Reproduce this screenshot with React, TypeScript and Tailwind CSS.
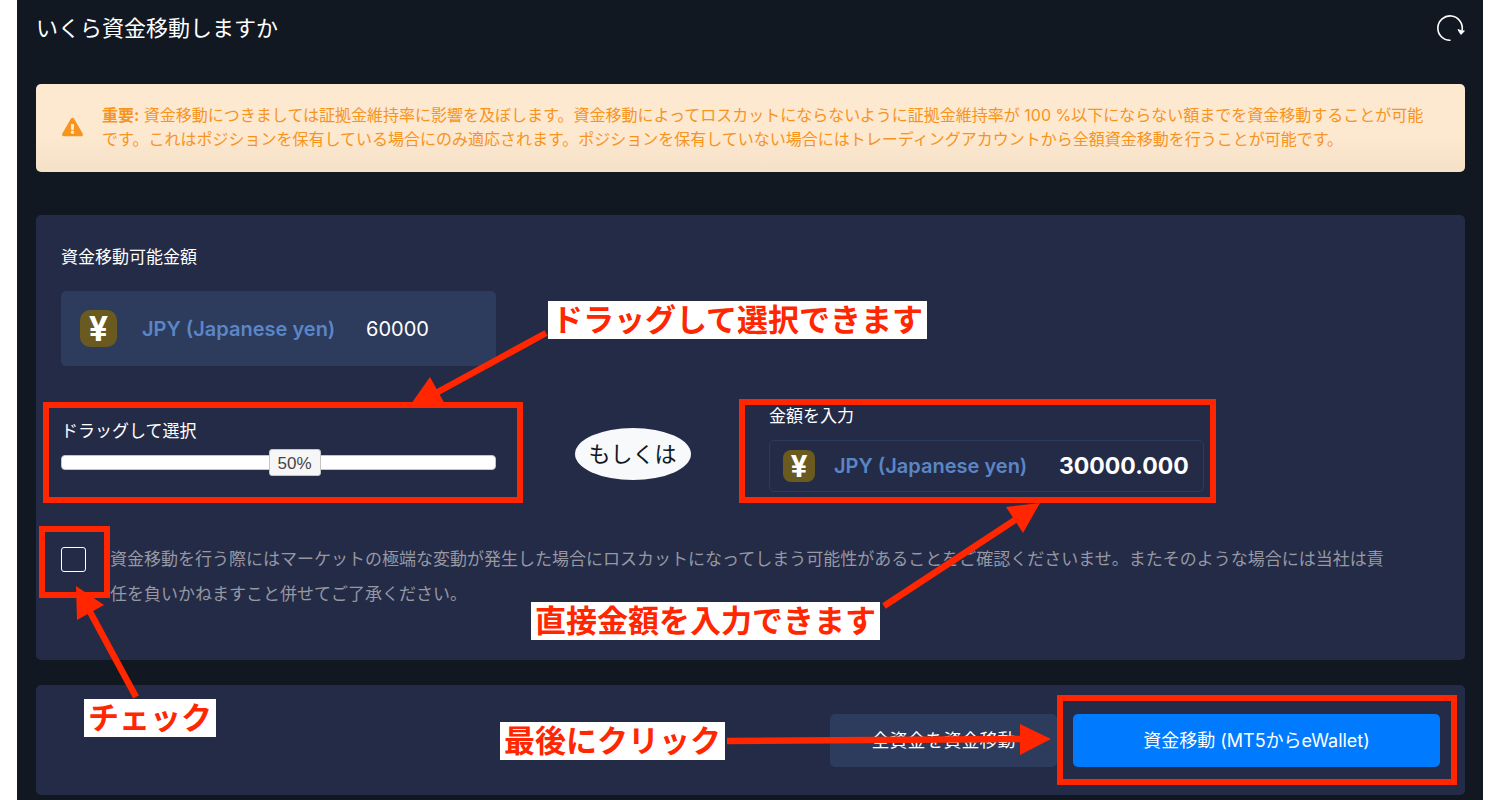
import React, { useState } from 'react';
import { FaExclamationTriangle } from 'react-icons/fa';

interface CalloutProps {
  className: string;
  children: React.ReactNode;
}

interface ArrowProps {
  className: string;
  width: number;
  height: number;
  line: [number, number, number, number];
  head: string;
}

const Callout: React.FC<CalloutProps> = ({ className, children }) => (
  <span
    className={`pointer-events-none absolute z-20 bg-white px-1 text-[31px] leading-[38px] font-bold whitespace-nowrap text-[#ff2600] ${className}`}
  >
    {children}
  </span>
);

const Frame: React.FC<{ className: string }> = ({ className }) => (
  <span className={`pointer-events-none absolute z-10 border-6 border-[#ff2600] ${className}`} />
);

const Arrow: React.FC<ArrowProps> = ({ className, width, height, line, head }) => (
  <svg
    className={`pointer-events-none absolute z-20 max-w-none ${className}`}
    width={width}
    height={height}
    viewBox={`0 0 ${width} ${height}`}
    aria-hidden="true"
  >
    <line x1={line[0]} y1={line[1]} x2={line[2]} y2={line[3]} stroke="#ff2600" strokeWidth="6.5" />
    <polygon points={head} fill="#ff2600" />
  </svg>
);

const RefreshIcon: React.FC = () => (
  <svg width="30" height="30" viewBox="0 0 30 30" fill="none" aria-hidden="true">
    <path
      d="M15 27.3A12.2 12.2 0 1 1 27.1 17"
      stroke="white"
      strokeWidth="1.6"
      strokeLinecap="round"
    />
    <path d="M23 16.6L26.6 17.8L29.4 18L25.9 21.4Z" fill="white" stroke="white" strokeWidth="1" strokeLinejoin="round" />
  </svg>
);

const Alert: React.FC = () => (
  <div
    role="alert"
    className="flex items-center gap-[19px] rounded-[5px] bg-linear-to-b from-[#fde8d0] from-60% to-[#f4e1c6] px-[26px] pt-[19px] pb-[21px] text-[#f7941d]"
  >
    <FaExclamationTriangle className="h-5 w-[21px] shrink-0" aria-hidden="true" />
    <p className="text-base leading-6">
      <strong className="font-bold">重要:</strong>{' '}
      資金移動につきましては証拠金維持率に影響を及ぼします。資金移動によってロスカットにならないように証拠金維持率が 100 %以下にならない額までを資金移動することが可能
      <br />
      です。これはポジションを保有している場合にのみ適応されます。ポジションを保有していない場合にはトレーディングアカウントから全額資金移動を行うことが可能です。
    </p>
  </div>
);

const App: React.FC = () => {
  const [percent, setPercent] = useState(50);
  const [amount, setAmount] = useState('30000.000');

  const handleDrag = (value: number) => {
    setPercent(value);
    setAmount((600 * value).toFixed(3));
  };

  return (
    <div className="min-h-screen bg-white px-[17px] font-[Inter,'Noto_Sans_CJK_JP',sans-serif]">
      <main className="min-h-screen overflow-hidden bg-[#111821] pr-[18px] pl-[19px] text-white">
        <header className="flex items-center justify-between pt-3 pb-10">
          <h1 className="text-[22px] leading-8">いくら資金移動しますか</h1>
          <button type="button" aria-label="更新">
            <RefreshIcon />
          </button>
        </header>

        <Alert />

        <section className="mt-[43px] rounded-[5px] bg-[#242b47] px-[25px] pt-[30px] pb-12">
          <h2 className="text-[17px] leading-6">資金移動可能金額</h2>

          <div className="grid grid-cols-[435fr_273fr_435fr_236fr]">
            <div className="mt-[22px] flex h-[75px] items-center rounded-[5px] bg-[#2d3b5d] pl-[19px]">
              <span className="flex size-[37px] items-center justify-center rounded-[10px] bg-[#6a5a20] text-[34px] leading-none font-bold">
                ¥
              </span>
              <span className="ml-[25px] w-[200px] text-xl font-semibold text-[#5b86c5]">
                JPY (Japanese yen)
              </span>
              <span className="ml-6 text-xl">60000</span>
            </div>
          </div>

          <div className="mt-[37px] grid grid-cols-[435fr_273fr_435fr_236fr]">
            <div className="relative pt-4">
              <label htmlFor="percent" className="block text-[17px] leading-6">
                ドラッグして選択
              </label>
              <div className="relative mt-3 h-[15px]">
                <input
                  id="percent"
                  type="range"
                  min={0}
                  max={100}
                  value={percent}
                  onChange={(e) => handleDrag(Number(e.target.value))}
                  className="block h-[15px] w-full appearance-none rounded-[4px] border border-[#c5c5c5] bg-white [&::-webkit-slider-thumb]:opacity-0"
                />
                <span
                  className="pointer-events-none absolute -top-[6px] -ml-[10px] h-[27px] w-[52px] rounded-[3px] border border-[#c5c5c5] bg-[#f6f6f6] text-center font-[Liberation_Sans,sans-serif] text-[17px] leading-[27px] text-[#454545]"
                  style={{ left: `${percent}%` }}
                >
                  {percent}%
                </span>
              </div>
              <Frame className="-top-px -right-[27px] -bottom-[11px] -left-[18px]" />
              <Arrow
                className="-top-[73px] left-[350px]"
                width={137}
                height={78}
                line={[135, 3, 25, 63]}
                head="19,47 35,76 0,74"
              />
              <Callout className="-top-[102px] left-[487px]">ドラッグして選択できます</Callout>
            </div>

            <div className="flex justify-center pt-[25px]">
              <span className="flex h-[52px] w-[116px] items-center justify-center rounded-[50%] bg-[#f8f9fb] text-[22px] text-[#111821]">
                もしくは
              </span>
            </div>

            <div className="relative">
              <label htmlFor="amount" className="block pt-px text-[17px] leading-6">
                金額を入力
              </label>
              <div className="mt-3 flex h-[52px] items-center rounded-[5px] border border-[#2d3b5d] pr-3 pl-[13px]">
                <span className="flex size-8 shrink-0 items-center justify-center rounded-[8px] bg-[#6a5a20] text-[30px] leading-none font-bold">
                  ¥
                </span>
                <span className="ml-[19px] w-[200px] shrink-0 text-xl font-semibold text-[#5b86c5]">
                  JPY (Japanese yen)
                </span>
                <input
                  id="amount"
                  type="text"
                  value={amount}
                  onChange={(e) => setAmount(e.target.value)}
                  className="ml-[25px] w-0 grow bg-transparent text-[23px] font-bold outline-none"
                />
              </div>
              <Frame className="-top-1 -right-3 -bottom-[11px] -left-[30px]" />
              <Arrow
                className="top-[97px] left-[111px]"
                width={165}
                height={110}
                line={[4, 106, 135, 20]}
                head="160,3 126,7 143,33"
              />
              <Callout className="top-[199px] -left-[238px]">直接金額を入力できます</Callout>
            </div>
          </div>

          <div className="mt-[50px] flex items-start">
            <div className="relative mt-[5px] size-[25px] shrink-0">
              <input
                id="agree"
                type="checkbox"
                className="block size-[25px] appearance-none rounded-[3px] border border-white checked:bg-[#007bff]"
              />
              <Frame className="-top-[21px] -left-[22px] h-[72px] w-[71px]" />
              <Arrow
                className="top-[37px] left-[13px]"
                width={68}
                height={116}
                line={[62, 113, 15, 26]}
                head="2,2 30,21 3,36"
              />
              <Callout className="top-[152px] left-[23px]">チェック</Callout>
            </div>
            <label htmlFor="agree" className="ml-6 text-[17px] leading-[35px] text-[#9698a2]">
              資金移動を行う際にはマーケットの極端な変動が発生した場合にロスカットになってしまう可能性があることをご確認くださいませ。またそのような場合には当社は責
              <br />
              任を負いかねますこと併せてご了承ください。
            </label>
          </div>
        </section>

        <section className="mt-[25px] flex justify-end gap-4 rounded-[5px] bg-[#242b47] px-[25px] pt-[29px] pb-7">
          <button type="button" className="h-[53px] w-[227px] rounded-[5px] bg-[#2d3b5d] text-lg">
            全資金を資金移動
          </button>
          <div className="relative">
            <button type="button" className="h-[53px] w-[367px] rounded-[5px] bg-[#007bff] text-lg">
              資金移動 (MT5からeWallet)
            </button>
            <Frame className="-top-[19px] -right-[17px] -bottom-[18px] -left-4" />
            <Arrow
              className="top-[10px] -left-[346px]"
              width={326}
              height={32}
              line={[0, 17, 295, 15]}
              head="293,0 293,31 324,15"
            />
            <Callout className="top-2 -left-[573px]">最後にクリック</Callout>
          </div>
        </section>
      </main>
    </div>
  );
};

export default App;
